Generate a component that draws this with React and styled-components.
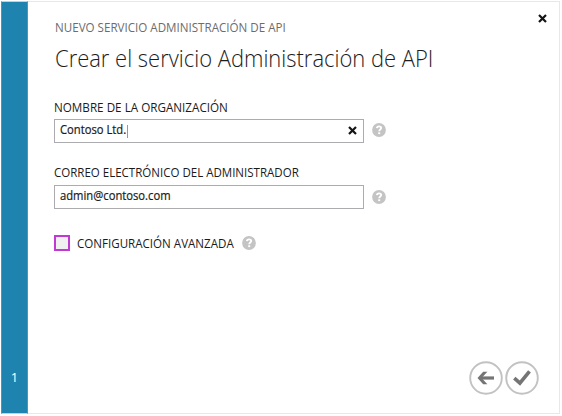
import React from "react";
import styled, { createGlobalStyle } from "styled-components";

const GlobalStyle = createGlobalStyle`
  * { box-sizing: border-box; }
  body { margin: 0; background: #fff; font-family: "Open Sans", "Noto Sans", sans-serif; }
`;

const Dialog = styled.div`
  display: flex;
  width: 559px;
  height: 413px;
  margin: 1px 0 0 1px;
  background: #fff;
  border: 1px solid #e8e8e8;
  border-left: 0;
`;

const StepRail = styled.aside`
  display: flex;
  flex-direction: column;
  justify-content: flex-end;
  align-items: center;
  width: 27px;
  margin: -1px 0;
  padding-bottom: 27px;
  background: #1f83b0;
  border: 1px solid #4399be;
  border-top-color: #b4d5e4;
  border-bottom-color: #b4d5e4;
  color: #fff;
  font-size: 13px;
  line-height: 18px;
`;

const Content = styled.main`
  display: flex;
  flex: 1;
  flex-direction: column;
  padding: 8px 10px 18px 26px;
`;

const Header = styled.header`
  display: flex;
  justify-content: space-between;
  height: 89px;
`;

const Titles = styled.div`
  display: flex;
  flex-direction: column;
  padding: 9px 0 0 0.5px;
`;

const Text = styled.span`
  display: block;
  min-width: 0;
  white-space: nowrap;
  transform: scaleX(${(p) => p.$stretch});
  transform-origin: left center;
`;

const Eyebrow = styled(Text)`
  color: #6c6c6c;
  font-size: 12px;
  line-height: 18px;
`;

const Title = styled(Text).attrs({ as: "h1" })`
  margin: 4px 0 0;
  color: #1c1c1c;
  font-size: 24px;
  font-weight: 300;
  line-height: 34px;
`;

const CloseButton = styled.button`
  display: flex;
  width: 12px;
  height: 16px;
  padding: 4px 1px;
  border: 0;
  background: none;
`;

const Field = styled.section`
  height: ${(p) => p.$height}px;
`;

const Label = styled(Text)`
  height: 17px;
  color: #1a1a1a;
  font-size: 12px;
  line-height: 17px;
`;

const FieldRow = styled.div`
  display: flex;
  align-items: flex-start;
  gap: 8px;
  margin-top: ${(p) => p.$top}px;
`;

const InputBox = styled.div`
  display: flex;
  align-items: center;
  justify-content: space-between;
  width: 310px;
  height: 24px;
  padding: 0 6px 2px 5px;
  border: 1px solid #acacb0;
`;

const Value = styled.div`
  display: flex;
  align-items: center;
  width: ${(p) => p.$width}px;
  height: 16px;
  padding-bottom: 2px;
  color: #1a1a1a;
  font-size: 12px;
  -webkit-text-stroke: 0.2px #1a1a1a;
`;

const Caret = styled.span`
  flex: none;
  width: 1px;
  height: 13px;
  margin: 4px 0 0 auto;
  background: #999;
`;

const HelpSlot = styled.span`
  display: flex;
  padding-top: ${(p) => p.$top}px;
`;

const Option = styled.div`
  display: flex;
  align-items: center;
  height: 16px;
  margin-top: 4px;
`;

const Checkbox = styled.span`
  width: 16px;
  height: 16px;
  margin-right: 7px;
  border: 2px solid #c238d3;
  background: #f0f0f0;
`;

const OptionLabel = styled.div`
  width: 165px;
`;

const Footer = styled.footer`
  display: flex;
  justify-content: flex-end;
  gap: 2px;
  margin-top: auto;
  padding-right: 10px;
`;

const RoundButton = styled.button`
  display: flex;
  width: 34px;
  height: 34px;
  padding: 0;
  border: 0;
  background: none;
`;

const Cross = () => (
  <svg width="9" height="9" viewBox="0 0 9 9">
    <path d="M1 1L8 8M8 1L1 8" stroke="#151515" strokeWidth="2.2" />
  </svg>
);

const Help = () => (
  <svg width="14" height="14" viewBox="0 0 14 14">
    <circle cx="7" cy="7" r="6.9" fill="#c4c4c4" />
    <path d="M4.9 5.1C5 3.7 6 3.3 7.1 3.3C8.4 3.3 9.2 4 9.2 5C9.2 6.5 7.2 6.5 7.2 8.3" fill="none" stroke="#fff" strokeWidth="1.8" />
    <rect x="6.2" y="9.3" width="2" height="1.8" fill="#fff" />
  </svg>
);

const Back = () => (
  <svg width="34" height="34" viewBox="0 0 34 34">
    <circle cx="17" cy="17" r="15.8" fill="none" stroke="#c2c2c2" strokeWidth="1.9" />
    <path d="M25 17H11" fill="none" stroke="#757575" strokeWidth="3.2" />
    <path d="M14.2 10.7H18.4L12.6 17L18.4 23.3H14.2L8.5 17Z" fill="#757575" />
  </svg>
);

const Accept = () => (
  <svg width="34" height="34" viewBox="0 0 34 34">
    <circle cx="17" cy="17" r="15.8" fill="none" stroke="#c2c2c2" strokeWidth="1.9" />
    <path d="M9.3 17.2L14.9 22.2L24.5 10.4" fill="none" stroke="#757575" strokeWidth="3.6" />
  </svg>
);

export default function App() {
  return (
    <>
      <GlobalStyle />
      <Dialog>
        <StepRail>1</StepRail>
        <Content>
          <Header>
            <Titles>
              <Eyebrow $stretch={0.967}>NUEVO SERVICIO ADMINISTRACIÓN DE API</Eyebrow>
              <Title $stretch={0.915}>Crear el servicio Administración de API</Title>
            </Titles>
            <CloseButton aria-label="Cerrar"><Cross /></CloseButton>
          </Header>
          <Field $height={65}>
            <Label $stretch={0.973}>NOMBRE DE LA ORGANIZACIÓN</Label>
            <FieldRow $top={3}>
              <InputBox>
                <Value $width={68}><Text $stretch={0.935}>Contoso Ltd.</Text><Caret /></Value>
                <Cross />
              </InputBox>
              <HelpSlot $top={4}><Help /></HelpSlot>
            </FieldRow>
          </Field>
          <Field $height={67}>
            <Label $stretch={0.96}>CORREO ELECTRÓNICO DEL ADMINISTRADOR</Label>
            <FieldRow $top={4}>
              <InputBox>
                <Value $width={140}><Text $stretch={0.935}>admin@contoso.com</Text></Value>
              </InputBox>
              <HelpSlot $top={5}><Help /></HelpSlot>
            </FieldRow>
          </Field>
          <Option>
            <Checkbox />
            <OptionLabel><Label $stretch={0.965}>CONFIGURACIÓN AVANZADA</Label></OptionLabel>
            <Help />
          </Option>
          <Footer>
            <RoundButton aria-label="Atrás"><Back /></RoundButton>
            <RoundButton aria-label="Aceptar"><Accept /></RoundButton>
          </Footer>
        </Content>
      </Dialog>
    </>
  );
}
